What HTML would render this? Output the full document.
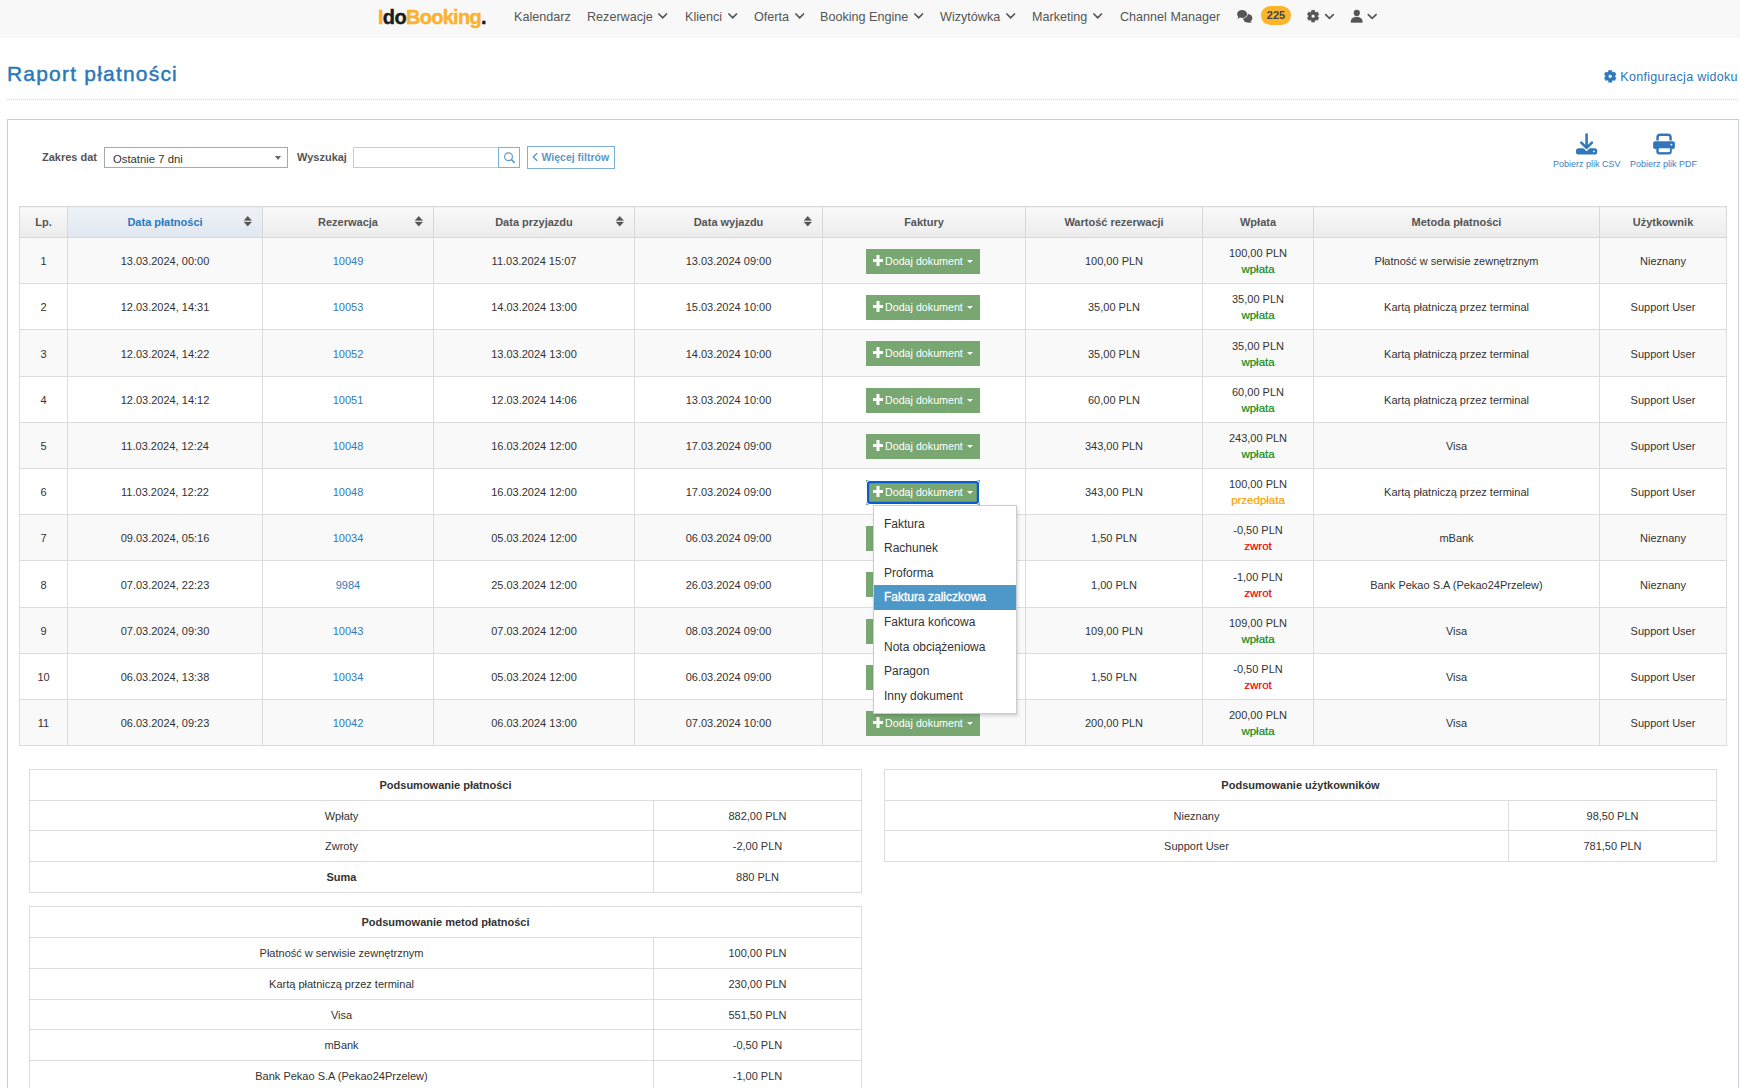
<!DOCTYPE html>
<html><head><meta charset="utf-8">
<style>
*{box-sizing:border-box;margin:0;padding:0}
html,body{width:1740px;height:1088px;overflow:hidden;background:#fff;font-family:"Liberation Sans",sans-serif;color:#333}
.abs{position:absolute}
#nav{position:absolute;left:0;top:0;width:1740px;height:38px;background:#f8f8f8}
.ni{position:absolute;top:9px;font-size:12.6px;color:#555;line-height:16px;white-space:nowrap}
.chev{display:inline-block;margin-left:5.5px;vertical-align:middle;position:relative;top:-1px}
#logo{position:absolute;left:378px;top:7px;font-size:20px;font-weight:bold;line-height:20px;color:#fbb12f;letter-spacing:-0.7px;-webkit-text-stroke:0.4px #fbb12f}
#logo .k{color:#1b1b1b;-webkit-text-stroke:0.4px #1b1b1b}
#badge{position:absolute;left:1261px;top:6px;width:30px;height:19px;line-height:19px;text-align:center;font-size:11px;font-weight:bold;color:#444;z-index:2}
#title{position:absolute;left:7px;top:61px;font-size:21px;line-height:26px;color:#2a78b8;letter-spacing:1.2px;white-space:nowrap;-webkit-text-stroke:0.45px #2a78b8}
#dots{position:absolute;left:7px;top:99px;width:1732px;height:1px;background-image:linear-gradient(to right,#d4d4d4 50%,transparent 50%);background-size:2px 1px}
#konf{position:absolute;left:1620.3px;top:68px;font-size:12.5px;letter-spacing:0.3px;line-height:18px;color:#2a76ba;white-space:nowrap}
#panel{position:absolute;left:7px;top:119px;width:1732px;height:1000px;border:1px solid #c3cfdc}
.lbl{position:absolute;font-size:11px;font-weight:bold;color:#555;line-height:14px;white-space:nowrap}
#sel{position:absolute;left:104px;top:147px;width:184px;height:21px;border:1px solid #a9a9a9;background:#fff;font-size:11.3px;line-height:22px;padding-left:8px;color:#333}
#sel .ar{position:absolute;right:6px;top:8px;width:0;height:0;border-left:3.5px solid transparent;border-right:3.5px solid transparent;border-top:4px solid #666}
#inp{position:absolute;left:353px;top:147px;width:146px;height:21px;border:1px solid #ccc;background:#fff}
#sbtn{position:absolute;left:498px;top:147px;width:22px;height:21px;border:1px solid #7fb0d8;background:#fff}
#more{position:absolute;left:527px;top:146px;width:88px;height:23px;border:1px solid #7fb0d8;background:#fff;color:#5b98c9;font-size:10.5px;font-weight:bold;line-height:21px;white-space:nowrap;padding-left:13.5px}
.dl{position:absolute;font-size:9px;color:#3d7fc1;line-height:11px;white-space:nowrap}
#tbl{position:absolute;left:19px;top:206px;border-collapse:collapse;table-layout:fixed;width:1708px}
#tbl th{height:31px;background:linear-gradient(#f9f9f9,#ececec);border:1px solid #d8d8d8;font-size:11px;font-weight:bold;color:#555;text-align:center;position:relative;padding:0}
#tbl th.active{background:linear-gradient(#eef2f8,#e0e7f0);color:#2a78c0}
#tbl th .sort{position:absolute;right:10px;top:9.2px}
#tbl td{border:1px solid #dcdcdc;font-size:11px;text-align:center;color:#333;padding:1px 0 0 0;line-height:16px}
#tbl tr.odd td{background:#f9f9f9}
#tbl tr.even td{background:#fff}
.lnk{color:#337ab7}
.st{font-size:11.5px;-webkit-text-stroke:0.2px currentColor} .st.g{color:#118a11} .st.o{color:#f5a300} .st.r{color:#f20000}
.btn{display:inline-block;position:relative;left:-1px;width:114px;height:25px;background:#78a772;color:#fff;font-size:10.7px;line-height:25px;text-align:left;vertical-align:middle;white-space:nowrap}
.btn .plus{position:absolute;left:6.8px;top:6px}
.btn .bt{position:absolute;left:19px;top:0}
.btn .caret{position:absolute;left:101px;top:11px;width:0;height:0;border-left:3.2px solid transparent;border-right:3.2px solid transparent;border-top:3.5px solid #fff}
.btn.focus::after{content:'';position:absolute;left:0;top:0;right:0;bottom:0;border-radius:4px;box-shadow:inset 0 0 0 1px #fff,inset 0 0 0 3.2px #0a5cd4}
#menu{position:absolute;left:873px;top:505px;width:144px;height:209px;background:#fff;border:1px solid #ccc;box-shadow:1px 2px 3px rgba(0,0,0,.15);padding-top:5px}
#menu div{height:24.64px;line-height:24.64px;padding-left:10px;padding-top:0.5px;font-size:12px;color:#333;white-space:nowrap}
#menu div.hl{background:#4c98c9;color:#fff;-webkit-text-stroke:0.35px #fff}
.sum{position:absolute;border-collapse:collapse;table-layout:fixed}
.sum td,.sum th{border:1px solid #dcdcdc;font-size:11px;text-align:center;color:#333;padding:0}
.sum th{font-weight:bold}
</style></head><body>
<div id="nav">
 <div id="logo"><span>I</span><span class="k">do</span>Booking<span class="k">.</span></div>
 <div class="ni" style="left:514px">Kalendarz</div>
 <div class="ni" style="left:587px">Rezerwacje<svg class="chev" width="10" height="7" viewBox="0 0 10 7"><polyline points="0.9,1 4.7,4.8 8.5,1" fill="none" stroke="#555" stroke-width="1.7" stroke-linecap="round"/></svg></div>
 <div class="ni" style="left:685px">Klienci<svg class="chev" width="10" height="7" viewBox="0 0 10 7"><polyline points="0.9,1 4.7,4.8 8.5,1" fill="none" stroke="#555" stroke-width="1.7" stroke-linecap="round"/></svg></div>
 <div class="ni" style="left:754px">Oferta<svg class="chev" width="10" height="7" viewBox="0 0 10 7"><polyline points="0.9,1 4.7,4.8 8.5,1" fill="none" stroke="#555" stroke-width="1.7" stroke-linecap="round"/></svg></div>
 <div class="ni" style="left:820px">Booking Engine<svg class="chev" width="10" height="7" viewBox="0 0 10 7"><polyline points="0.9,1 4.7,4.8 8.5,1" fill="none" stroke="#555" stroke-width="1.7" stroke-linecap="round"/></svg></div>
 <div class="ni" style="left:940px">Wizytówka<svg class="chev" width="10" height="7" viewBox="0 0 10 7"><polyline points="0.9,1 4.7,4.8 8.5,1" fill="none" stroke="#555" stroke-width="1.7" stroke-linecap="round"/></svg></div>
 <div class="ni" style="left:1032px">Marketing<svg class="chev" width="10" height="7" viewBox="0 0 10 7"><polyline points="0.9,1 4.7,4.8 8.5,1" fill="none" stroke="#555" stroke-width="1.7" stroke-linecap="round"/></svg></div>
 <div class="ni" style="left:1120px">Channel Manager</div>
 <div id="badge">225</div>
</div>

<div id="title">Raport płatności</div>
<div id="konf">Konfiguracja widoku</div>
<div id="dots"></div>
<div id="panel"></div>
<div class="lbl" style="left:42px;top:150px">Zakres dat</div>
<div id="sel">Ostatnie 7 dni<span class="ar"></span></div>
<div class="lbl" style="left:297px;top:150px">Wyszukaj</div>
<div id="inp"></div>
<div id="sbtn"></div>
<div id="more">Więcej filtrów</div>
<div class="dl" style="left:1553px;top:159px">Pobierz plik CSV</div>
<div class="dl" style="left:1630px;top:159px">Pobierz plik PDF</div>
<table id="tbl"><colgroup><col style="width:48px"><col style="width:195px"><col style="width:171px"><col style="width:201px"><col style="width:188px"><col style="width:203px"><col style="width:177px"><col style="width:111px"><col style="width:286px"><col style="width:127px"></colgroup>
<tr><th>Lp.</th><th class="active">Data płatności<svg class="sort" width="8" height="11" viewBox="0 0 8 11"><path d="M3.75 0.2 L7.6 4.5 H-0.1 Z M-0.1 6.0 H7.6 L3.75 10.3 Z" fill="#555" stroke="#555" stroke-width="0.3" stroke-linejoin="round"/></svg></th><th>Rezerwacja<svg class="sort" width="8" height="11" viewBox="0 0 8 11"><path d="M3.75 0.2 L7.6 4.5 H-0.1 Z M-0.1 6.0 H7.6 L3.75 10.3 Z" fill="#555" stroke="#555" stroke-width="0.3" stroke-linejoin="round"/></svg></th><th>Data przyjazdu<svg class="sort" width="8" height="11" viewBox="0 0 8 11"><path d="M3.75 0.2 L7.6 4.5 H-0.1 Z M-0.1 6.0 H7.6 L3.75 10.3 Z" fill="#555" stroke="#555" stroke-width="0.3" stroke-linejoin="round"/></svg></th><th>Data wyjazdu<svg class="sort" width="8" height="11" viewBox="0 0 8 11"><path d="M3.75 0.2 L7.6 4.5 H-0.1 Z M-0.1 6.0 H7.6 L3.75 10.3 Z" fill="#555" stroke="#555" stroke-width="0.3" stroke-linejoin="round"/></svg></th><th>Faktury</th><th>Wartość rezerwacji</th><th>Wpłata</th><th>Metoda płatności</th><th>Użytkownik</th></tr>
<tr class="odd" style="height:46px"><td>1</td><td>13.03.2024, 00:00</td><td><span class="lnk">10049</span></td><td>11.03.2024 15:07</td><td>13.03.2024 09:00</td><td><span class="btn"><svg class="plus" width="10" height="11" viewBox="0 0 10 11"><path d="M3.5 0 H6.5 V4 H10 V7 H6.5 V11 H3.5 V7 H0 V4 H3.5 Z" fill="#fff"/></svg><span class="bt">Dodaj dokument</span><span class="caret"></span></span></td><td>100,00 PLN</td><td><div class="amt">100,00 PLN</div><div class="st g">wpłata</div></td><td>Płatność w serwisie zewnętrznym</td><td>Nieznany</td></tr><tr class="even" style="height:46px"><td>2</td><td>12.03.2024, 14:31</td><td><span class="lnk">10053</span></td><td>14.03.2024 13:00</td><td>15.03.2024 10:00</td><td><span class="btn"><svg class="plus" width="10" height="11" viewBox="0 0 10 11"><path d="M3.5 0 H6.5 V4 H10 V7 H6.5 V11 H3.5 V7 H0 V4 H3.5 Z" fill="#fff"/></svg><span class="bt">Dodaj dokument</span><span class="caret"></span></span></td><td>35,00 PLN</td><td><div class="amt">35,00 PLN</div><div class="st g">wpłata</div></td><td>Kartą płatniczą przez terminal</td><td>Support User</td></tr><tr class="odd" style="height:47px"><td>3</td><td>12.03.2024, 14:22</td><td><span class="lnk">10052</span></td><td>13.03.2024 13:00</td><td>14.03.2024 10:00</td><td><span class="btn"><svg class="plus" width="10" height="11" viewBox="0 0 10 11"><path d="M3.5 0 H6.5 V4 H10 V7 H6.5 V11 H3.5 V7 H0 V4 H3.5 Z" fill="#fff"/></svg><span class="bt">Dodaj dokument</span><span class="caret"></span></span></td><td>35,00 PLN</td><td><div class="amt">35,00 PLN</div><div class="st g">wpłata</div></td><td>Kartą płatniczą przez terminal</td><td>Support User</td></tr><tr class="even" style="height:46px"><td>4</td><td>12.03.2024, 14:12</td><td><span class="lnk">10051</span></td><td>12.03.2024 14:06</td><td>13.03.2024 10:00</td><td><span class="btn"><svg class="plus" width="10" height="11" viewBox="0 0 10 11"><path d="M3.5 0 H6.5 V4 H10 V7 H6.5 V11 H3.5 V7 H0 V4 H3.5 Z" fill="#fff"/></svg><span class="bt">Dodaj dokument</span><span class="caret"></span></span></td><td>60,00 PLN</td><td><div class="amt">60,00 PLN</div><div class="st g">wpłata</div></td><td>Kartą płatniczą przez terminal</td><td>Support User</td></tr><tr class="odd" style="height:46px"><td>5</td><td>11.03.2024, 12:24</td><td><span class="lnk">10048</span></td><td>16.03.2024 12:00</td><td>17.03.2024 09:00</td><td><span class="btn"><svg class="plus" width="10" height="11" viewBox="0 0 10 11"><path d="M3.5 0 H6.5 V4 H10 V7 H6.5 V11 H3.5 V7 H0 V4 H3.5 Z" fill="#fff"/></svg><span class="bt">Dodaj dokument</span><span class="caret"></span></span></td><td>343,00 PLN</td><td><div class="amt">243,00 PLN</div><div class="st g">wpłata</div></td><td>Visa</td><td>Support User</td></tr><tr class="even" style="height:46px"><td>6</td><td>11.03.2024, 12:22</td><td><span class="lnk">10048</span></td><td>16.03.2024 12:00</td><td>17.03.2024 09:00</td><td><span class="btn focus"><svg class="plus" width="10" height="11" viewBox="0 0 10 11"><path d="M3.5 0 H6.5 V4 H10 V7 H6.5 V11 H3.5 V7 H0 V4 H3.5 Z" fill="#fff"/></svg><span class="bt">Dodaj dokument</span><span class="caret"></span></span></td><td>343,00 PLN</td><td><div class="amt">100,00 PLN</div><div class="st o">przedpłata</div></td><td>Kartą płatniczą przez terminal</td><td>Support User</td></tr><tr class="odd" style="height:46px"><td>7</td><td>09.03.2024, 05:16</td><td><span class="lnk">10034</span></td><td>05.03.2024 12:00</td><td>06.03.2024 09:00</td><td><span class="btn"><svg class="plus" width="10" height="11" viewBox="0 0 10 11"><path d="M3.5 0 H6.5 V4 H10 V7 H6.5 V11 H3.5 V7 H0 V4 H3.5 Z" fill="#fff"/></svg><span class="bt">Dodaj dokument</span><span class="caret"></span></span></td><td>1,50 PLN</td><td><div class="amt">-0,50 PLN</div><div class="st r">zwrot</div></td><td>mBank</td><td>Nieznany</td></tr><tr class="even" style="height:47px"><td>8</td><td>07.03.2024, 22:23</td><td><span class="lnk">9984</span></td><td>25.03.2024 12:00</td><td>26.03.2024 09:00</td><td><span class="btn"><svg class="plus" width="10" height="11" viewBox="0 0 10 11"><path d="M3.5 0 H6.5 V4 H10 V7 H6.5 V11 H3.5 V7 H0 V4 H3.5 Z" fill="#fff"/></svg><span class="bt">Dodaj dokument</span><span class="caret"></span></span></td><td>1,00 PLN</td><td><div class="amt">-1,00 PLN</div><div class="st r">zwrot</div></td><td>Bank Pekao S.A (Pekao24Przelew)</td><td>Nieznany</td></tr><tr class="odd" style="height:46px"><td>9</td><td>07.03.2024, 09:30</td><td><span class="lnk">10043</span></td><td>07.03.2024 12:00</td><td>08.03.2024 09:00</td><td><span class="btn"><svg class="plus" width="10" height="11" viewBox="0 0 10 11"><path d="M3.5 0 H6.5 V4 H10 V7 H6.5 V11 H3.5 V7 H0 V4 H3.5 Z" fill="#fff"/></svg><span class="bt">Dodaj dokument</span><span class="caret"></span></span></td><td>109,00 PLN</td><td><div class="amt">109,00 PLN</div><div class="st g">wpłata</div></td><td>Visa</td><td>Support User</td></tr><tr class="even" style="height:46px"><td>10</td><td>06.03.2024, 13:38</td><td><span class="lnk">10034</span></td><td>05.03.2024 12:00</td><td>06.03.2024 09:00</td><td><span class="btn"><svg class="plus" width="10" height="11" viewBox="0 0 10 11"><path d="M3.5 0 H6.5 V4 H10 V7 H6.5 V11 H3.5 V7 H0 V4 H3.5 Z" fill="#fff"/></svg><span class="bt">Dodaj dokument</span><span class="caret"></span></span></td><td>1,50 PLN</td><td><div class="amt">-0,50 PLN</div><div class="st r">zwrot</div></td><td>Visa</td><td>Support User</td></tr><tr class="odd" style="height:46px"><td>11</td><td>06.03.2024, 09:23</td><td><span class="lnk">10042</span></td><td>06.03.2024 13:00</td><td>07.03.2024 10:00</td><td><span class="btn"><svg class="plus" width="10" height="11" viewBox="0 0 10 11"><path d="M3.5 0 H6.5 V4 H10 V7 H6.5 V11 H3.5 V7 H0 V4 H3.5 Z" fill="#fff"/></svg><span class="bt">Dodaj dokument</span><span class="caret"></span></span></td><td>200,00 PLN</td><td><div class="amt">200,00 PLN</div><div class="st g">wpłata</div></td><td>Visa</td><td>Support User</td></tr>
</table>
<div id="menu"><div>Faktura</div><div>Rachunek</div><div>Proforma</div><div class="hl">Faktura zaliczkowa</div><div>Faktura końcowa</div><div>Nota obciążeniowa</div><div>Paragon</div><div>Inny dokument</div></div>
<table class="sum" style="left:29px;top:769px;width:832px"><colgroup><col style="width:624px"><col style="width:208px"></colgroup>
<tr style="height:31px"><th colspan="2">Podsumowanie płatności</th></tr>
<tr style="height:30px"><td>Wpłaty</td><td>882,00 PLN</td></tr>
<tr style="height:31px"><td>Zwroty</td><td>-2,00 PLN</td></tr>
<tr style="height:31px"><td><b>Suma</b></td><td>880 PLN</td></tr>
</table>
<table class="sum" style="left:884px;top:769px;width:832px"><colgroup><col style="width:624px"><col style="width:208px"></colgroup>
<tr style="height:31px"><th colspan="2">Podsumowanie użytkowników</th></tr>
<tr style="height:30px"><td>Nieznany</td><td>98,50 PLN</td></tr>
<tr style="height:31px"><td>Support User</td><td>781,50 PLN</td></tr>
</table>
<table class="sum" style="left:29px;top:906px;width:832px"><colgroup><col style="width:624px"><col style="width:208px"></colgroup>
<tr style="height:31px"><th colspan="2">Podsumowanie metod płatności</th></tr>
<tr style="height:31px"><td>Płatność w serwisie zewnętrznym</td><td>100,00 PLN</td></tr>
<tr style="height:31px"><td>Kartą płatniczą przez terminal</td><td>230,00 PLN</td></tr>
<tr style="height:30px"><td>Visa</td><td>551,50 PLN</td></tr>
<tr style="height:31px"><td>mBank</td><td>-0,50 PLN</td></tr>
<tr style="height:31px"><td>Bank Pekao S.A (Pekao24Przelew)</td><td>-1,00 PLN</td></tr>
</table>

<svg class="abs" style="left:0;top:0" width="1740" height="200" viewBox="0 0 1740 200">
 <!-- chat -->
 <g fill="#555">
  <ellipse cx="1247.7" cy="18.3" rx="4.6" ry="4.2"/>
  <path d="M1249.6 21.6 L1252.4 22.7 L1247.8 22.4 Z"/>
  <ellipse cx="1242.1" cy="13.9" rx="5.7" ry="4.7" fill="#f8f8f8"/>
  <path d="M1242.1 9.9 C1245.0 9.9 1247.1 11.7 1247.1 13.9 C1247.1 16.1 1245.0 17.9 1242.1 17.9 C1241.3 17.9 1240.6 17.8 1240.0 17.6 C1239.2 18.3 1238.3 18.7 1237.1 18.8 C1237.7 18.1 1238.1 17.3 1238.2 16.5 C1237.5 15.8 1237.1 14.9 1237.1 13.9 C1237.1 11.7 1239.2 9.9 1242.1 9.9 Z"/>
 </g>
 <rect x="1260.9" y="6" width="30.1" height="19" rx="9.5" fill="#fbb52c"/>
 <path d="M1314.86 12.06 L1314.54 10.37 L1311.66 10.37 L1311.34 12.06 L1310.40 12.60 L1308.77 12.04 L1307.34 14.53 L1308.63 15.66 L1308.63 16.74 L1307.34 17.87 L1308.77 20.36 L1310.40 19.80 L1311.34 20.34 L1311.66 22.03 L1314.54 22.03 L1314.86 20.34 L1315.80 19.80 L1317.43 20.36 L1318.86 17.87 L1317.57 16.74 L1317.57 15.66 L1318.86 14.53 L1317.43 12.04 L1315.80 12.60 Z M1315.00 16.20 A1.9 1.9 0 1 0 1311.20 16.20 A1.9 1.9 0 1 0 1315.00 16.20 Z" fill="#555" fill-rule="evenodd" stroke="#555" stroke-width="0.6" stroke-linejoin="round"/>
 <polyline points="1325.7,14.6 1329.5,18.4 1333.3,14.6" fill="none" stroke="#555" stroke-width="1.7" stroke-linecap="round"/>
 <circle cx="1356.8" cy="12.9" r="3.1" fill="#555"/>
 <path d="M1351 22.5 V21.3 C1351 18.6 1353.5 17 1356.7 17 C1359.9 17 1362.3 18.6 1362.3 21.3 V22.5 Z" fill="#555" stroke="#555" stroke-width="0.4" stroke-linejoin="round"/>
 <polyline points="1368.3,14.6 1372.2,18.4 1376.1,14.6" fill="none" stroke="#555" stroke-width="1.7" stroke-linecap="round"/>
 <!-- konfig cog -->
 <path d="M1612.02 72.08 L1611.68 70.38 L1608.72 70.38 L1608.38 72.08 L1607.45 72.61 L1605.82 72.06 L1604.33 74.63 L1605.63 75.77 L1605.63 76.83 L1604.33 77.97 L1605.82 80.54 L1607.45 79.99 L1608.38 80.52 L1608.72 82.22 L1611.68 82.22 L1612.02 80.52 L1612.95 79.99 L1614.58 80.54 L1616.07 77.97 L1614.77 76.83 L1614.77 75.77 L1616.07 74.63 L1614.58 72.06 L1612.95 72.61 Z M1612.10 76.30 A1.9 1.9 0 1 0 1608.30 76.30 A1.9 1.9 0 1 0 1612.10 76.30 Z" fill="#2f78bd" fill-rule="evenodd" stroke="#2f78bd" stroke-width="0.6" stroke-linejoin="round"/>
 <!-- search -->
 <circle cx="508.5" cy="156.7" r="3.9" fill="none" stroke="#5f9dcc" stroke-width="1.2"/>
 <line x1="511.4" y1="159.6" x2="514.2" y2="162.4" stroke="#5f9dcc" stroke-width="1.7" stroke-linecap="round"/>
 <!-- more chevron -->
 <polyline points="536.9,153.4 533.3,157 536.9,160.6" fill="none" stroke="#5b9bc8" stroke-width="1.4" stroke-linecap="round" stroke-linejoin="round"/>
 <!-- download -->
 <g fill="#3377bb">
  <rect x="1576" y="148.2" width="21.2" height="6.3" rx="2.6"/>
  <polyline points="1582.6,144.2 1586.6,148.2 1590.6,144.2" fill="none" stroke="#fff" stroke-width="4.4" stroke-linejoin="miter"/>
  <line x1="1586.6" y1="134.6" x2="1586.6" y2="146" stroke="#3377bb" stroke-width="2.6" stroke-linecap="round"/>
  <polyline points="1581.3,142.6 1586.6,147.9 1591.9,142.6" fill="none" stroke="#3377bb" stroke-width="2.6" stroke-linecap="round" stroke-linejoin="round"/>
  <circle cx="1593.9" cy="151.4" r="0.9" fill="#fff"/>
 </g>
 <!-- print -->
 <g fill="#3377bb">
  <path d="M1657.55 140.5 V137.2 C1657.55 135.6 1658.6 134.65 1660.2 134.65 H1667.9 C1669.5 134.65 1670.55 135.6 1670.55 137.2 V140.5" fill="none" stroke="#3377bb" stroke-width="2.5"/>
  <rect x="1653.1" y="141.3" width="21.8" height="7.6" rx="2"/>
  <rect x="1656.3" y="146" width="15.5" height="8.5" rx="2.4"/>
  <rect x="1658.8" y="148.3" width="11.1" height="3.8" fill="#fff"/>
  <circle cx="1671.4" cy="144.6" r="0.95" fill="#fff"/>
 </g>
</svg>
</body></html>
